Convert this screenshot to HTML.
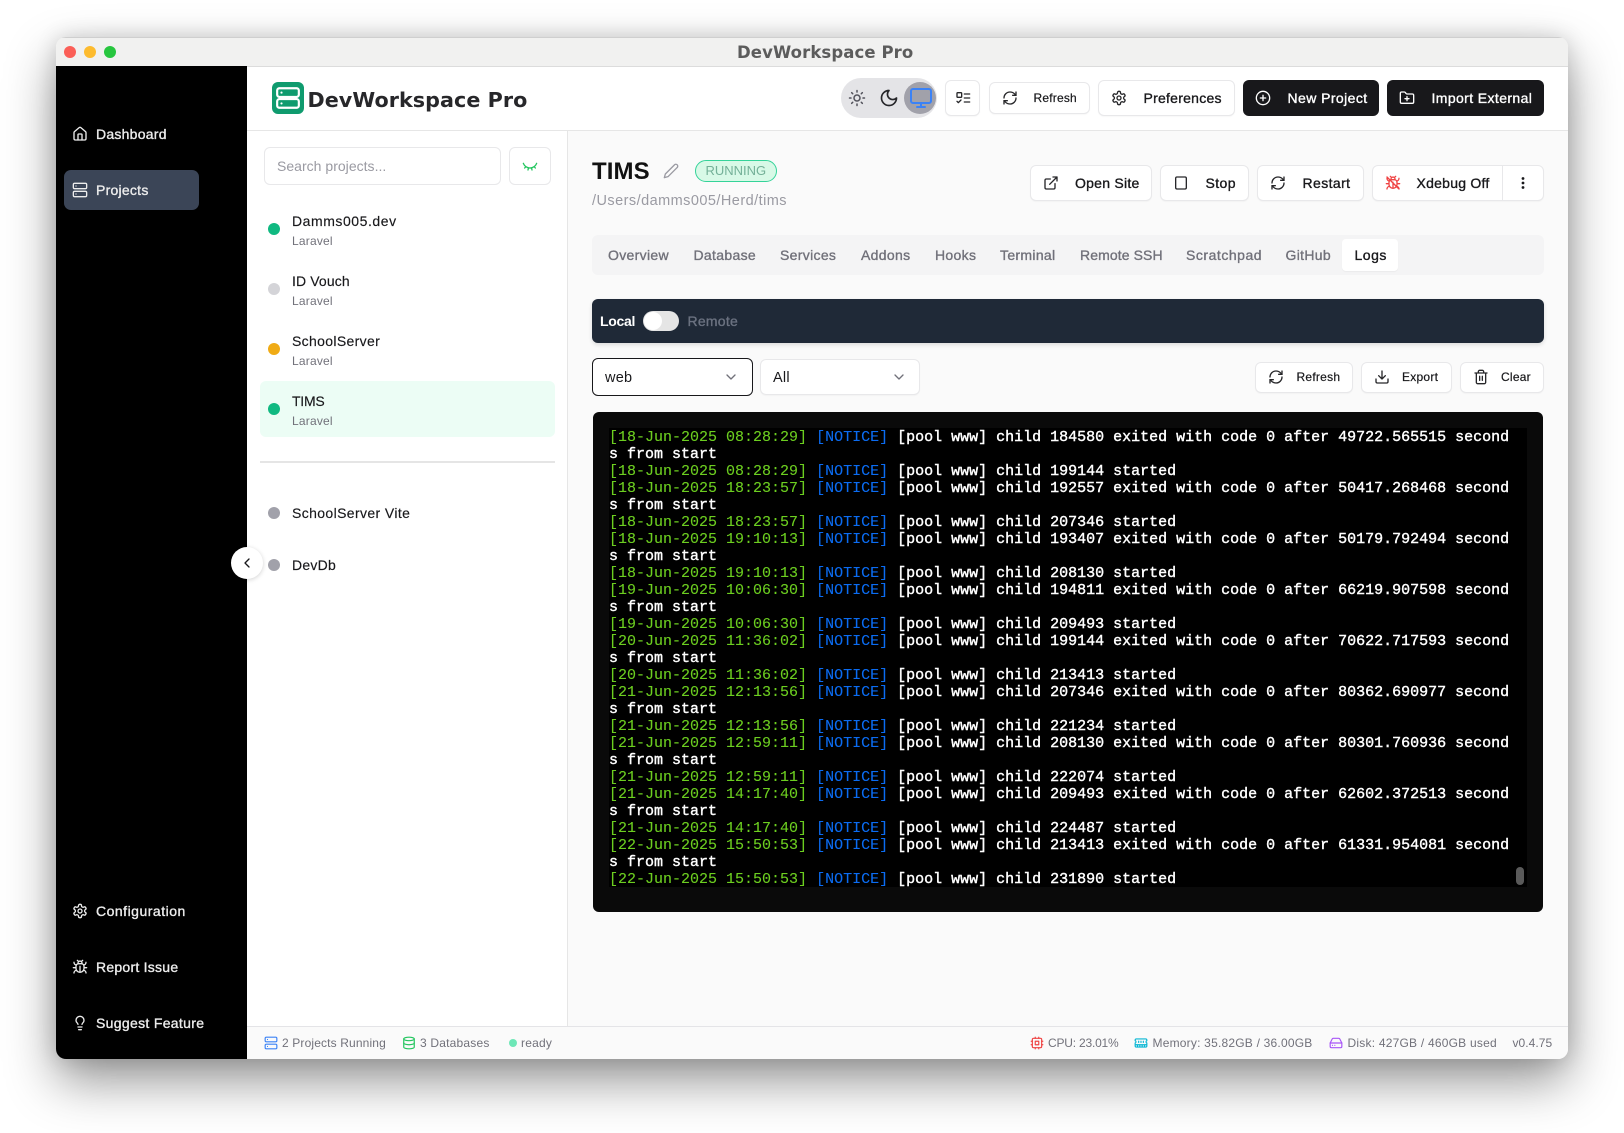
<!DOCTYPE html>
<html><head><meta charset="utf-8"><title>DevWorkspace Pro</title>
<style>
*{box-sizing:border-box;margin:0;padding:0}
html,body{width:1624px;height:1133px;background:#fff;overflow:hidden;font-family:"Liberation Sans",sans-serif}
.a{position:absolute}
.t{position:absolute;white-space:nowrap;line-height:20px;height:20px;font-size:14px;color:#18181b;letter-spacing:.25px}
.m{-webkit-text-stroke:.35px currentColor}
svg.i{position:absolute;fill:none;stroke:currentColor;stroke-width:2;stroke-linecap:round;stroke-linejoin:round}
.b{position:absolute;background:#fff;border:1px solid #e8e8ea;border-radius:6px;box-shadow:0 1px 1px rgba(0,0,0,.03)}
.d{position:absolute;border-radius:50%;width:12px;height:12px}
.s{font-size:12px;color:#71717a;letter-spacing:.2px}
.g{color:#71717a;letter-spacing:.32px}
.side{color:#ececec}
#log{position:absolute;left:609px;top:429px;font:15px/17px "Liberation Mono",monospace;color:#fff;font-weight:400;-webkit-text-stroke:.4px #fff;white-space:pre}
#log i{font-style:normal;color:#6cce20;-webkit-text-stroke:.1px #6cce20}
#log u{text-decoration:none;color:#0b6cf2;-webkit-text-stroke:.1px #0b6cf2}
</style></head><body>
<div class="a" style="left:56px;top:37px;width:1512px;height:1022px;border-radius:10px;background:#fafafa;box-shadow:0 22px 50px rgba(0,0,0,.42),0 0 22px rgba(0,0,0,.14);overflow:hidden">
</div>
<div class="a" style="left:56px;top:37px;width:1512px;height:1022px;border-radius:10px;overflow:hidden">
 <div class="a" style="left:0;top:0;width:1512px;height:30px;background:#f1f1f0;border-bottom:1px solid #dcdcdc;border-top:1px solid #cfcfcf"></div>
 <div class="a" style="left:0;top:29px;width:191px;height:993px;background:#000"></div>
 <div class="a" style="left:191px;top:29.5px;width:1321px;height:64px;background:#fff;border-bottom:1px solid #e6e6e6"></div>
 <div class="a" style="left:191px;top:93.5px;width:320.5px;height:895.5px;background:#fff;border-right:1px solid #e6e6e6"></div>
 <div class="a" style="left:191px;top:989px;width:1321px;height:33px;background:#fafafa;border-top:1px solid #e4e4e7"></div>
</div>
<div class="d" style="left:64px;top:46px;background:#fb5f57"></div>
<div class="d" style="left:84px;top:46px;background:#fdbb2e"></div>
<div class="d" style="left:104px;top:46px;background:#27c63f"></div>
<div class="t" style="left:737px;top:42.5px;font-family:'DejaVu Sans',sans-serif;font-weight:700;font-size:16.5px;color:#5c5c5c;letter-spacing:.1px">DevWorkspace Pro</div>

<!-- Sidebar -->
<div class="a" style="left:64px;top:170px;width:135px;height:40px;background:#3b4557;border-radius:7px"></div>
<svg class="i side" style="left:72px;top:126px" width="16" height="16" viewBox="0 0 24 24"><path d="M15 21v-8a1 1 0 0 0-1-1h-4a1 1 0 0 0-1 1v8"/><path d="M3 10a2 2 0 0 1 .709-1.528l7-5.999a2 2 0 0 1 2.582 0l7 5.999A2 2 0 0 1 21 10v9a2 2 0 0 1-2 2H5a2 2 0 0 1-2-2z"/></svg>
<div class="t m side" style="left:96px;top:124px">Dashboard</div>
<svg class="i side" style="left:72px;top:182px" width="16" height="16" viewBox="0 0 24 24"><rect x="2" y="2" width="20" height="8" rx="2"/><rect x="2" y="14" width="20" height="8" rx="2"/><path d="M6 6h.01M6 18h.01"/></svg>
<div class="t m side" style="left:96px;top:180px">Projects</div>
<svg class="i side" style="left:72px;top:903px" width="16" height="16" viewBox="0 0 24 24"><path d="M12.22 2h-.44a2 2 0 0 0-2 2v.18a2 2 0 0 1-1 1.73l-.43.25a2 2 0 0 1-2 0l-.15-.08a2 2 0 0 0-2.73.73l-.22.38a2 2 0 0 0 .73 2.73l.15.1a2 2 0 0 1 1 1.72v.51a2 2 0 0 1-1 1.74l-.15.09a2 2 0 0 0-.73 2.73l.22.38a2 2 0 0 0 2.73.73l.15-.08a2 2 0 0 1 2 0l.43.25a2 2 0 0 1 1 1.73V20a2 2 0 0 0 2 2h.44a2 2 0 0 0 2-2v-.18a2 2 0 0 1 1-1.73l.43-.25a2 2 0 0 1 2 0l.15.08a2 2 0 0 0 2.73-.73l.22-.39a2 2 0 0 0-.73-2.73l-.15-.08a2 2 0 0 1-1-1.74v-.5a2 2 0 0 1 1-1.74l.15-.09a2 2 0 0 0 .73-2.73l-.22-.38a2 2 0 0 0-2.73-.73l-.15.08a2 2 0 0 1-2 0l-.43-.25a2 2 0 0 1-1-1.73V4a2 2 0 0 0-2-2z"/><circle cx="12" cy="12" r="3"/></svg>
<div class="t m side" style="left:96px;top:901px;letter-spacing:.5px">Configuration</div>
<svg class="i side" style="left:72px;top:959px" width="16" height="16" viewBox="0 0 24 24"><path d="m8 2 1.88 1.88M14.12 3.88 16 2M9 7.13v-1a3 3 0 1 1 6 0v1M12 20c-3.3 0-6-2.7-6-6v-3a4 4 0 0 1 4-4h4a4 4 0 0 1 4 4v3c0 3.3-2.7 6-6 6M12 20v-9M6.53 9C4.6 8.8 3 7.1 3 5M6 13H2M3 21c0-2.1 1.7-3.9 3.8-4M20.97 5c0 2.1-1.6 3.8-3.5 4M22 13h-4M17.2 17c2.1.1 3.8 1.9 3.8 4"/></svg>
<div class="t m side" style="left:96px;top:957px">Report Issue</div>
<svg class="i side" style="left:72px;top:1015px" width="16" height="16" viewBox="0 0 24 24"><path d="M15 14c.2-1 .7-1.7 1.5-2.5 1-.9 1.5-2.2 1.5-3.5A6 6 0 0 0 6 8c0 1 .2 2.2 1.5 3.5.7.7 1.3 1.5 1.5 2.5M9 18h6M10 22h4"/></svg>
<div class="t m side" style="left:96px;top:1013px;letter-spacing:.32px">Suggest Feature</div>

<!-- Header -->
<div class="a" style="left:272px;top:82px;width:32px;height:32px;background:#0f9b6e;border-radius:6px"></div>
<svg class="i" style="left:275px;top:85px;color:#fff" width="26" height="26" viewBox="0 0 24 24" stroke-width="1.7"><rect x="2" y="3" width="20" height="8" rx="2"/><rect x="2" y="13" width="20" height="8" rx="2"/><path d="M6 7h.01M6 17h.01"/></svg>
<div class="t" style="left:307.5px;top:90px;font-family:'DejaVu Sans',sans-serif;font-weight:700;font-size:20.7px;color:#27272a;letter-spacing:.05px">DevWorkspace Pro</div>

<div class="a" style="left:841px;top:78px;width:95.5px;height:40px;background:#e4e4e7;border-radius:20px"></div>
<div class="a" style="left:904px;top:82px;width:32px;height:32px;background:#a1a1aa;border-radius:50%"></div>
<svg class="i" style="left:848px;top:89px;color:#52525b" width="18" height="18" viewBox="0 0 24 24" stroke-width="1.5"><circle cx="12" cy="12" r="4"/><path d="M12 2v2M12 20v2M4.9 4.9l1.4 1.4M17.7 17.7l1.4 1.4M2 12h2M20 12h2M6.3 17.7l-1.4 1.4M19.1 4.9l-1.4 1.4"/></svg>
<svg class="i" style="left:879px;top:88px;color:#27272a" width="20" height="20" viewBox="0 0 24 24" stroke-width="1.6"><path d="M12 3a6 6 0 0 0 9 9 9 9 0 1 1-9-9Z"/></svg>
<svg class="i" style="left:909px;top:86px;color:#3b82f6" width="24" height="24" viewBox="0 0 24 24" stroke-width="1.6"><rect x="2" y="3" width="20" height="14" rx="2"/><path d="M8 21h8M12 17v4"/></svg>

<div class="b" style="left:945px;top:80px;width:35px;height:36px"></div>
<svg class="i" style="left:955px;top:90px;color:#27272a" width="16" height="16" viewBox="0 0 24 24"><rect x="3" y="4" width="7" height="7" rx="1"/><path d="m3 17 2 2 4-4M14 6h8M14 12h8M14 18h8"/></svg>
<div class="b" style="left:989px;top:82px;width:101px;height:32px"></div>
<svg class="i" style="left:1002px;top:90px;color:#27272a" width="16" height="16" viewBox="0 0 24 24"><path d="M3 12a9 9 0 0 1 9-9 9.75 9.75 0 0 1 6.74 2.74L21 8"/><path d="M21 3v5h-5"/><path d="M21 12a9 9 0 0 1-9 9 9.75 9.75 0 0 1-6.74-2.74L3 16"/><path d="M8 16H3v5"/></svg>
<div class="t m" style="left:1033.5px;top:88px;font-size:12px;letter-spacing:.2px;-webkit-text-stroke-width:.2px">Refresh</div>
<div class="b" style="left:1098px;top:80px;width:137px;height:36px"></div>
<svg class="i" style="left:1111px;top:90px;color:#27272a" width="16" height="16" viewBox="0 0 24 24"><path d="M12.22 2h-.44a2 2 0 0 0-2 2v.18a2 2 0 0 1-1 1.73l-.43.25a2 2 0 0 1-2 0l-.15-.08a2 2 0 0 0-2.73.73l-.22.38a2 2 0 0 0 .73 2.73l.15.1a2 2 0 0 1 1 1.72v.51a2 2 0 0 1-1 1.74l-.15.09a2 2 0 0 0-.73 2.73l.22.38a2 2 0 0 0 2.73.73l.15-.08a2 2 0 0 1 2 0l.43.25a2 2 0 0 1 1 1.73V20a2 2 0 0 0 2 2h.44a2 2 0 0 0 2-2v-.18a2 2 0 0 1 1-1.73l.43-.25a2 2 0 0 1 2 0l.15.08a2 2 0 0 0 2.73-.73l.22-.39a2 2 0 0 0-.73-2.73l-.15-.08a2 2 0 0 1-1-1.74v-.5a2 2 0 0 1 1-1.74l.15-.09a2 2 0 0 0 .73-2.73l-.22-.38a2 2 0 0 0-2.73-.73l-.15.08a2 2 0 0 1-2 0l-.43-.25a2 2 0 0 1-1-1.73V4a2 2 0 0 0-2-2z"/><circle cx="12" cy="12" r="3"/></svg>
<div class="t m" style="left:1143.5px;top:88px">Preferences</div>
<div class="a" style="left:1243px;top:80px;width:136px;height:36px;background:#18181b;border-radius:6px"></div>
<svg class="i" style="left:1255px;top:90px;color:#fff" width="16" height="16" viewBox="0 0 24 24"><circle cx="12" cy="12" r="10"/><path d="M8 12h8M12 8v8"/></svg>
<div class="t m" style="left:1287.5px;top:88px;color:#fff;letter-spacing:.42px">New Project</div>
<div class="a" style="left:1387px;top:80px;width:157px;height:36px;background:#18181b;border-radius:6px"></div>
<svg class="i" style="left:1399px;top:90px;color:#fff" width="16" height="16" viewBox="0 0 24 24"><path d="M12 10v6M9 13h6"/><path d="M20 20a2 2 0 0 0 2-2V8a2 2 0 0 0-2-2h-7.9a2 2 0 0 1-1.69-.9L9.6 3.9A2 2 0 0 0 7.93 3H4a2 2 0 0 0-2 2v13a2 2 0 0 0 2 2Z"/></svg>
<div class="t m" style="left:1431.5px;top:88px;color:#fff;letter-spacing:.39px">Import External</div>

<!-- Project list -->
<div class="b" style="left:264px;top:147px;width:237px;height:38px;box-shadow:none"></div>
<div class="t" style="left:277px;top:156px;color:#9a9aa2;letter-spacing:.02px">Search projects...</div>
<div class="b" style="left:509px;top:147px;width:42px;height:38px;box-shadow:none"></div>
<svg class="i" style="left:522px;top:158px;color:#22c55e" width="16" height="16" viewBox="0 0 24 24"><path d="m15 18-.722-3.25M2 8a10.645 10.645 0 0 0 20 0M20 15l-1.726-2.05M4 15l1.726-2.05M9 18l.722-3.25"/></svg>

<div class="a" style="left:260px;top:381px;width:295px;height:56px;background:#ecfdf5;border-radius:6px"></div>
<div class="a" style="left:260px;top:461px;width:295px;height:2px;background:#e5e5e5"></div>
<div class="d" style="left:268px;top:223px;background:#10b981"></div>
<div class="t m" style="left:292px;top:211px;letter-spacing:.55px;-webkit-text-stroke-width:.15px">Damms005.dev</div>
<div class="t s" style="left:292px;top:231px">Laravel</div>
<div class="d" style="left:268px;top:283px;background:#d4d4d8"></div>
<div class="t m" style="left:292px;top:271px;letter-spacing:.12px;-webkit-text-stroke-width:.15px">ID Vouch</div>
<div class="t s" style="left:292px;top:291px">Laravel</div>
<div class="d" style="left:268px;top:343px;background:#f0ab15"></div>
<div class="t m" style="left:292px;top:331px;letter-spacing:.34px;-webkit-text-stroke-width:.15px">SchoolServer</div>
<div class="t s" style="left:292px;top:351px">Laravel</div>
<div class="d" style="left:268px;top:403px;background:#10b981"></div>
<div class="t m" style="left:292px;top:391px;letter-spacing:-.25px;-webkit-text-stroke-width:.15px">TIMS</div>
<div class="t s" style="left:292px;top:411px">Laravel</div>
<div class="d" style="left:268px;top:507px;background:#a1a1aa"></div>
<div class="t m" style="left:292px;top:503px;letter-spacing:.38px;-webkit-text-stroke-width:.15px">SchoolServer Vite</div>
<div class="d" style="left:268px;top:559px;background:#a1a1aa"></div>
<div class="t m" style="left:292px;top:555px;-webkit-text-stroke-width:.15px">DevDb</div>
<div class="a" style="left:231px;top:547px;width:32px;height:32px;border-radius:50%;background:#fff;box-shadow:0 1px 5px rgba(0,0,0,.18)"></div>
<svg class="i" style="left:239px;top:555px;color:#18181b" width="16" height="16" viewBox="0 0 24 24" stroke-width="2.4"><path d="m15 18-6-6 6-6"/></svg>

<!-- Project header -->
<div class="t" style="left:592px;top:162px;font-size:24px;font-weight:700;color:#111;letter-spacing:.1px">TIMS</div>
<svg class="i" style="left:663px;top:163px;color:#9a9aa2" width="16" height="16" viewBox="0 0 24 24"><path d="M17 3a2.85 2.85 0 1 1 4 4L7.5 20.5 2 22l1.5-5.5Z"/></svg>
<div class="a" style="left:695px;top:160px;width:82px;height:22px;background:#d8f9e7;border:1px solid #34d399;border-radius:11px"></div>
<div class="t" style="left:705.5px;top:161px;font-size:13px;color:#74b098;letter-spacing:0">RUNNING</div>
<div class="t" style="left:592px;top:191px;font-size:14.5px;color:#9a9aa2;letter-spacing:.45px">/Users/damms005/Herd/tims</div>

<div class="b" style="left:1030px;top:165px;width:121.5px;height:36px"></div>
<svg class="i" style="left:1043px;top:175px;color:#27272a" width="16" height="16" viewBox="0 0 24 24"><path d="M15 3h6v6M10 14 21 3M18 13v6a2 2 0 0 1-2 2H5a2 2 0 0 1-2-2V8a2 2 0 0 1 2-2h6"/></svg>
<div class="t m" style="left:1075px;top:173px">Open Site</div>
<div class="b" style="left:1160px;top:165px;width:89px;height:36px"></div>
<svg class="i" style="left:1173px;top:175px;color:#27272a" width="16" height="16" viewBox="0 0 24 24"><rect x="4" y="3" width="16" height="18" rx="2"/></svg>
<div class="t m" style="left:1205.5px;top:173px;letter-spacing:.4px">Stop</div>
<div class="b" style="left:1257px;top:165px;width:106.5px;height:36px"></div>
<svg class="i" style="left:1270px;top:175px;color:#27272a" width="16" height="16" viewBox="0 0 24 24"><path d="M3 12a9 9 0 0 1 9-9 9.75 9.75 0 0 1 6.74 2.74L21 8"/><path d="M21 3v5h-5"/><path d="M21 12a9 9 0 0 1-9 9 9.75 9.75 0 0 1-6.74-2.74L3 16"/><path d="M8 16H3v5"/></svg>
<div class="t m" style="left:1302.5px;top:173px;letter-spacing:.4px">Restart</div>
<div class="b" style="left:1372px;top:165px;width:171.5px;height:36px"></div>
<div class="a" style="left:1502px;top:166px;width:1px;height:34px;background:#e8e8ea"></div>
<svg class="i" style="left:1385px;top:175px;color:#ef4444" width="16" height="16" viewBox="0 0 24 24" stroke-width="1.4"><path d="m8 2 1.88 1.88M14.12 3.88 16 2M9 7.13v-1a3 3 0 1 1 6 0v1M12 20c-3.3 0-6-2.7-6-6v-3a4 4 0 0 1 4-4h4a4 4 0 0 1 4 4v3c0 3.3-2.7 6-6 6M12 20v-9M6.53 9C4.6 8.8 3 7.1 3 5M6 13H2M3 21c0-2.1 1.7-3.9 3.8-4M20.97 5c0 2.1-1.6 3.8-3.5 4M22 13h-4M17.2 17c2.1.1 3.8 1.9 3.8 4M3 3l18 18"/></svg>
<div class="t m" style="left:1416.5px;top:173px">Xdebug Off</div>
<svg class="a" style="left:1515px;top:175px" width="16" height="16" viewBox="0 0 16 16" fill="#18181b"><circle cx="8" cy="3.5" r="1.4"/><circle cx="8" cy="8" r="1.4"/><circle cx="8" cy="12.5" r="1.4"/></svg>

<!-- Tabs -->
<div class="a" style="left:592px;top:235px;width:952px;height:40px;background:#f4f4f5;border-radius:6px"></div>
<div class="a" style="left:1342px;top:239px;width:56px;height:32px;background:#fff;border-radius:4px;box-shadow:0 1px 1px rgba(0,0,0,.04)"></div>
<div class="t g m" style="left:608px;top:245px">Overview</div>
<div class="t g m" style="left:693.5px;top:245px">Database</div>
<div class="t g m" style="left:780px;top:245px">Services</div>
<div class="t g m" style="left:861px;top:245px">Addons</div>
<div class="t g m" style="left:935px;top:245px">Hooks</div>
<div class="t g m" style="left:1000px;top:245px">Terminal</div>
<div class="t g m" style="left:1080px;top:245px;letter-spacing:.1px">Remote SSH</div>
<div class="t g m" style="left:1186px;top:245px;letter-spacing:.53px">Scratchpad</div>
<div class="t g m" style="left:1285.5px;top:245px">GitHub</div>
<div class="t m" style="left:1354.5px;top:245px;letter-spacing:.5px">Logs</div>

<!-- Local / remote -->
<div class="a" style="left:592px;top:299px;width:952px;height:44px;background:#1f2937;border-radius:6px;box-shadow:0 2px 4px rgba(0,0,0,.12)"></div>
<div class="t" style="left:600px;top:311px;color:#fff;font-weight:700;letter-spacing:-.3px">Local</div>
<div class="a" style="left:643px;top:311px;width:36px;height:20px;background:#e5e5e5;border-radius:10px"></div>
<div class="a" style="left:644px;top:312px;width:18px;height:18px;background:#fff;border-radius:50%"></div>
<div class="t m" style="left:687.5px;top:311px;color:#6b7280">Remote</div>

<!-- Selects -->
<div class="a" style="left:591.5px;top:358px;width:161px;height:38px;background:#fff;border:1.3px solid #18181b;border-radius:6px"></div>
<div class="t" style="left:605px;top:368px;font-size:14.5px">web</div>
<svg class="i" style="left:723px;top:369px;color:#71717a" width="16" height="16" viewBox="0 0 24 24" stroke-width="1.7"><path d="m6 9 6 6 6-6"/></svg>
<div class="b" style="left:760px;top:359px;width:160px;height:35.5px"></div>
<div class="t" style="left:773px;top:368px;font-size:14.5px">All</div>
<svg class="i" style="left:891px;top:369px;color:#71717a" width="16" height="16" viewBox="0 0 24 24" stroke-width="1.7"><path d="m6 9 6 6 6-6"/></svg>

<div class="b" style="left:1255px;top:361.5px;width:97.5px;height:31px"></div>
<svg class="i" style="left:1268px;top:369px;color:#27272a" width="16" height="16" viewBox="0 0 24 24"><path d="M3 12a9 9 0 0 1 9-9 9.75 9.75 0 0 1 6.74 2.74L21 8"/><path d="M21 3v5h-5"/><path d="M21 12a9 9 0 0 1-9 9 9.75 9.75 0 0 1-6.74-2.74L3 16"/><path d="M8 16H3v5"/></svg>
<div class="t m" style="left:1296.5px;top:367px;font-size:12px;letter-spacing:.25px;-webkit-text-stroke-width:.2px">Refresh</div>
<div class="b" style="left:1361px;top:361.5px;width:90.5px;height:31px"></div>
<svg class="i" style="left:1374px;top:369px;color:#27272a" width="16" height="16" viewBox="0 0 24 24"><path d="M12 3v12M7 10l5 5 5-5M3 15v4a2 2 0 0 0 2 2h14a2 2 0 0 0 2-2v-4"/></svg>
<div class="t m" style="left:1402px;top:367px;font-size:12px;letter-spacing:.25px;-webkit-text-stroke-width:.2px">Export</div>
<div class="b" style="left:1460px;top:361.5px;width:83.5px;height:31px"></div>
<svg class="i" style="left:1473px;top:369px;color:#27272a" width="16" height="16" viewBox="0 0 24 24"><path d="M3 6h18M19 6v14c0 1-1 2-2 2H7c-1 0-2-1-2-2V6M8 6V4c0-1 1-2 2-2h4c1 0 2 1 2 2v2M10 11v6M14 11v6"/></svg>
<div class="t m" style="left:1501px;top:367px;font-size:12px;letter-spacing:.25px;-webkit-text-stroke-width:.2px">Clear</div>

<!-- Terminal -->
<div class="a" style="left:593px;top:412px;width:950px;height:500px;background:#0a0a0a;border-radius:6px"></div>
<div class="a" style="left:609px;top:428px;width:918px;height:459px;background:#000"></div>
<pre id="log"><i>[18-Jun-2025 08:28:29]</i> <u>[NOTICE]</u> [pool www] child 184580 exited with code 0 after 49722.565515 second
s from start
<i>[18-Jun-2025 08:28:29]</i> <u>[NOTICE]</u> [pool www] child 199144 started
<i>[18-Jun-2025 18:23:57]</i> <u>[NOTICE]</u> [pool www] child 192557 exited with code 0 after 50417.268468 second
s from start
<i>[18-Jun-2025 18:23:57]</i> <u>[NOTICE]</u> [pool www] child 207346 started
<i>[18-Jun-2025 19:10:13]</i> <u>[NOTICE]</u> [pool www] child 193407 exited with code 0 after 50179.792494 second
s from start
<i>[18-Jun-2025 19:10:13]</i> <u>[NOTICE]</u> [pool www] child 208130 started
<i>[19-Jun-2025 10:06:30]</i> <u>[NOTICE]</u> [pool www] child 194811 exited with code 0 after 66219.907598 second
s from start
<i>[19-Jun-2025 10:06:30]</i> <u>[NOTICE]</u> [pool www] child 209493 started
<i>[20-Jun-2025 11:36:02]</i> <u>[NOTICE]</u> [pool www] child 199144 exited with code 0 after 70622.717593 second
s from start
<i>[20-Jun-2025 11:36:02]</i> <u>[NOTICE]</u> [pool www] child 213413 started
<i>[21-Jun-2025 12:13:56]</i> <u>[NOTICE]</u> [pool www] child 207346 exited with code 0 after 80362.690977 second
s from start
<i>[21-Jun-2025 12:13:56]</i> <u>[NOTICE]</u> [pool www] child 221234 started
<i>[21-Jun-2025 12:59:11]</i> <u>[NOTICE]</u> [pool www] child 208130 exited with code 0 after 80301.760936 second
s from start
<i>[21-Jun-2025 12:59:11]</i> <u>[NOTICE]</u> [pool www] child 222074 started
<i>[21-Jun-2025 14:17:40]</i> <u>[NOTICE]</u> [pool www] child 209493 exited with code 0 after 62602.372513 second
s from start
<i>[21-Jun-2025 14:17:40]</i> <u>[NOTICE]</u> [pool www] child 224487 started
<i>[22-Jun-2025 15:50:53]</i> <u>[NOTICE]</u> [pool www] child 213413 exited with code 0 after 61331.954081 second
s from start
<i>[22-Jun-2025 15:50:53]</i> <u>[NOTICE]</u> [pool www] child 231890 started</pre>
<div class="a" style="left:1516px;top:867px;width:8px;height:18px;background:#5a5a5a;border-radius:4px"></div>

<!-- Status bar -->
<svg class="i" style="left:264px;top:1036px;color:#3b82f6" width="14" height="14" viewBox="0 0 24 24"><rect x="2" y="2" width="20" height="8" rx="2"/><rect x="2" y="14" width="20" height="8" rx="2"/><path d="M6 6h.01M6 18h.01"/></svg>
<div class="t s" style="left:282px;top:1033px;letter-spacing:.14px">2 Projects Running</div>
<svg class="i" style="left:402px;top:1036px;color:#22c55e" width="14" height="14" viewBox="0 0 24 24"><ellipse cx="12" cy="5" rx="9" ry="3"/><path d="M3 5V19A9 3 0 0 0 21 19V5"/><path d="M3 12A9 3 0 0 0 21 12"/></svg>
<div class="t s" style="left:420px;top:1033px">3 Databases</div>
<div class="a" style="left:509px;top:1038.5px;width:8px;height:8px;border-radius:50%;background:#6ee7b7"></div>
<div class="t s" style="left:521px;top:1033px">ready</div>
<svg class="i" style="left:1030px;top:1036px;color:#ef4444" width="14" height="14" viewBox="0 0 24 24"><rect x="4" y="4" width="16" height="16" rx="2"/><rect x="9" y="9" width="6" height="6"/><path d="M15 2v2M15 20v2M2 15h2M2 9h2M20 15h2M20 9h2M9 2v2M9 20v2"/></svg>
<div class="t s" style="left:1048px;top:1033px;letter-spacing:-.2px">CPU: 23.01%</div>
<svg class="i" style="left:1134px;top:1036px;color:#06b6d4" width="14" height="14" viewBox="0 0 24 24"><path d="M6 19v-3M10 19v-3M14 19v-3M18 19v-3M8 11V9M16 11V9M12 11V9M2 15h20M2 7a2 2 0 0 1 2-2h16a2 2 0 0 1 2 2v1.1a2 2 0 0 0 0 3.837V17a2 2 0 0 1-2 2H4a2 2 0 0 1-2-2v-5.1a2 2 0 0 0 0-3.837Z"/></svg>
<div class="t s" style="left:1152.5px;top:1033px;letter-spacing:.21px">Memory: 35.82GB / 36.00GB</div>
<svg class="i" style="left:1329px;top:1036px;color:#a855f7" width="14" height="14" viewBox="0 0 24 24"><path d="M22 12H2"/><path d="M5.45 5.11 2 12v6a2 2 0 0 0 2 2h16a2 2 0 0 0 2-2v-6l-3.45-6.89A2 2 0 0 0 16.76 4H7.24a2 2 0 0 0-1.79 1.11z"/><path d="M6 16h.01M10 16h.01"/></svg>
<div class="t s" style="left:1347.5px;top:1033px;letter-spacing:.22px">Disk: 427GB / 460GB used</div>
<div class="t s" style="left:1512.5px;top:1033px;letter-spacing:.05px">v0.4.75</div>
</body></html>
